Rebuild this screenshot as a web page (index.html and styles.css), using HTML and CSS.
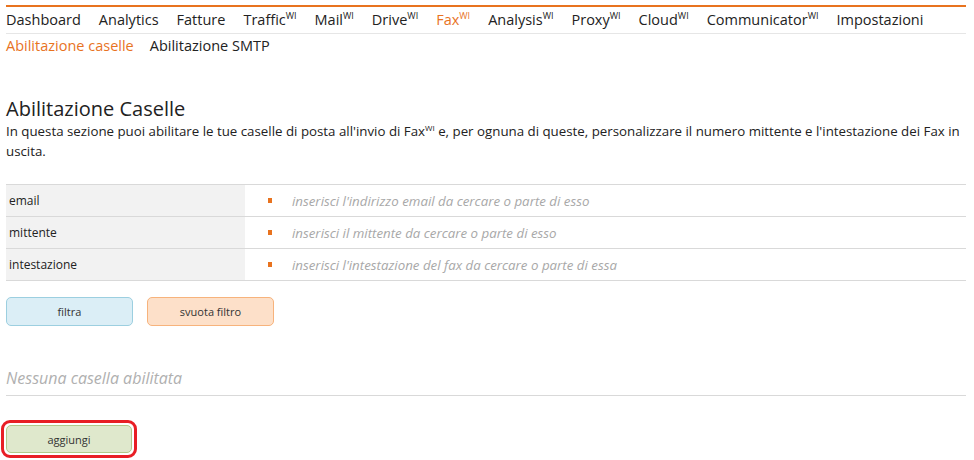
FILE: index.html
```html
<!DOCTYPE html>
<html>
<head>
<meta charset="utf-8">
<link rel="stylesheet" href="styles.css">
</head>
<body>
<div class="page">
  <nav class="mainnav">
    <a>Dashboard</a>
    <a>Analytics</a>
    <a>Fatture</a>
    <a>Traffic<sup>WI</sup></a>
    <a>Mail<sup>WI</sup></a>
    <a>Drive<sup>WI</sup></a>
    <a class="active">Fax<sup>WI</sup></a>
    <a>Analysis<sup>WI</sup></a>
    <a>Proxy<sup>WI</sup></a>
    <a>Cloud<sup>WI</sup></a>
    <a>Communicator<sup>WI</sup></a>
    <a>Impostazioni</a>
  </nav>
  <nav class="subnav">
    <a class="active">Abilitazione caselle</a>
    <a>Abilitazione SMTP</a>
  </nav>

  <h1 class="title">Abilitazione Caselle</h1>
  <p class="desc">In questa sezione puoi abilitare le tue caselle di posta all'invio di Fax<sup>WI</sup> e, per ognuna di queste, personalizzare il numero mittente e l'intestazione dei Fax in uscita.</p>

  <div class="filters">
    <div class="row">
      <div class="label">email</div>
      <div class="field"><span class="mark"></span><span class="ph">inserisci l'indirizzo email da cercare o parte di esso</span></div>
    </div>
    <div class="row">
      <div class="label">mittente</div>
      <div class="field"><span class="mark"></span><span class="ph">inserisci il mittente da cercare o parte di esso</span></div>
    </div>
    <div class="row">
      <div class="label">intestazione</div>
      <div class="field"><span class="mark"></span><span class="ph">inserisci l'intestazione del fax da cercare o parte di essa</span></div>
    </div>
  </div>

  <div class="buttons">
    <button class="btn blue">filtra</button>
    <button class="btn orange">svuota filtro</button>
  </div>

  <div class="empty">Nessuna casella abilitata</div>

  <div class="addwrap">
    <div class="ring"><button class="btn green">aggiungi</button></div>
  </div>
</div>
</body>
</html>
```
FILE: styles.css
```css
html, body {
  margin: 0;
  padding: 0;
  background: #fff;
}
body {
  font-family: "Open Sans", "Noto Sans", sans-serif;
  color: #222;
}
.page {
  width: 960px;
  margin-left: 6px;
  padding-top: 5px;
}
.mainnav {
  border-top: 2px solid #e8731f;
  border-bottom: 1px solid #e6e6e6;
  display: flex;
  gap: 18px;
  height: 26px;
  align-items: center;
  font-size: 14.5px;
  line-height: 20px;
}
.mainnav a, .subnav a {
  color: #222;
  white-space: nowrap;
}
.mainnav a.active, .subnav a.active {
  color: #e8731f;
}
sup {
  font-size: 9px;
  line-height: 0;
  vertical-align: 6px;
}
.subnav {
  display: flex;
  gap: 16px;
  font-size: 14.5px;
  line-height: 20px;
  padding-top: 2px;
}
.title {
  font-weight: 400;
  font-size: 20px;
  line-height: 26px;
  margin: 40px 0 0 0;
  color: #222;
}
.desc {
  font-size: 13.3px;
  line-height: 20px;
  margin: -1px 0 0 0;
  color: #222;
}
.desc sup {
  font-size: 8px;
  vertical-align: 5px;
}
.filters {
  margin-top: 23px;
  border-top: 1px solid #d9d9d9;
}
.row {
  display: flex;
  height: 31px;
  border-bottom: 1px solid #d9d9d9;
}
.label {
  width: 236px;
  background: #f2f2f2;
  padding-left: 3px;
  font-size: 12px;
  display: flex;
  align-items: center;
  color: #222;
}
.field {
  flex: 1;
  display: flex;
  align-items: center;
}
.mark {
  width: 4px;
  height: 5px;
  background: #e8731f;
  margin-left: 23px;
  margin-right: 20px;
}
.ph {
  font-style: italic;
  color: #a8a8a8;
  font-size: 13.3px;
}
.buttons {
  display: flex;
  gap: 14px;
  margin-top: 16px;
}
.btn {
  width: 127px;
  height: 29px;
  border-radius: 5px;
  font-family: "Open Sans", "Noto Sans", sans-serif;
  font-size: 11px;
  color: #333;
  padding: 0;
  box-sizing: border-box;
}
.btn.blue {
  background: #dbeef6;
  border: 1px solid #9ccfe0;
}
.btn.orange {
  background: #fde0c9;
  border: 1px solid #f7b37c;
}
.btn.green {
  background: #dfe8cc;
  border: 1px solid #b1c98a;
  width: 126px;
  height: 28px;
  display: block;
}
.empty {
  margin-top: 40px;
  font-style: italic;
  color: #b0b0b0;
  font-size: 16px;
  line-height: 24px;
  padding-bottom: 5px;
  border-bottom: 1px solid #d9d9d9;
}
.addwrap {
  margin-top: 24px;
  margin-left: -5px;
}
.ring {
  display: inline-block;
  border: 3px solid #e81e25;
  border-radius: 9px;
  padding: 2px;
}
```
